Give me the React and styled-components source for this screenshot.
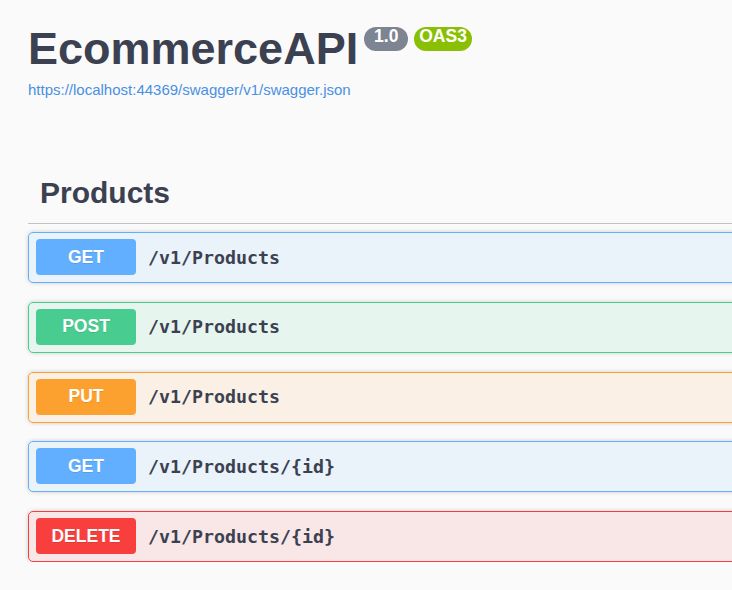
import styled, { createGlobalStyle } from "styled-components";

const GlobalStyle = createGlobalStyle`
	html,
	body {
		margin: 0;
		padding: 0;
		background: #fafafa;
		overflow: hidden;
	}
`;

const methods = {
	get: { main: "#61affe", bg: "rgba(97, 175, 254, 0.1)" },
	post: { main: "#49cc90", bg: "rgba(73, 204, 144, 0.1)" },
	put: { main: "#fca130", bg: "rgba(252, 161, 48, 0.1)" },
	delete: { main: "#f93e3e", bg: "rgba(249, 62, 62, 0.1)" },
};

const operations = [
	{ method: "get", path: "/v1/Products" },
	{ method: "post", path: "/v1/Products" },
	{ method: "put", path: "/v1/Products" },
	{ method: "get", path: "/v1/Products/{id}" },
	{ method: "delete", path: "/v1/Products/{id}" },
];

function App() {
	return (
		<>
			<GlobalStyle />
			<Wrapper>
				<Info>
					<TitleRow>
						<Title>EcommerceAPI</Title>
						<Stamp $color="#7d8492">{" 1.0 "}</Stamp>
						<Stamp $color="#89bf04">OAS3</Stamp>
					</TitleRow>
					<SpecLink href="#">https://localhost:44369/swagger/v1/swagger.json</SpecLink>
				</Info>

				<TagSection>
					<TagHeader>Products</TagHeader>
					<OpList>
						{operations.map((op, i) => (
							<OpBlock key={i} $method={op.method}>
								<Method $method={op.method}>{op.method.toUpperCase()}</Method>
								<Path>{op.path}</Path>
							</OpBlock>
						))}
					</OpList>
				</TagSection>
			</Wrapper>
		</>
	);
}

export default App;

const Wrapper = styled.div`
	width: 1200px;
	padding: 23px 28px 0;
	font-family: "Liberation Sans", Arial, sans-serif;
	color: #3b4151;
`;

const Info = styled.div`
	display: flex;
	flex-direction: column;
	align-items: flex-start;
`;

const TitleRow = styled.div`
	display: flex;
	align-items: flex-start;
`;

const Title = styled.h2`
	margin: 0;
	font-size: 45px;
	line-height: 52px;
	font-weight: 700;
	color: #3b4151;
`;

const Stamp = styled.small`
	margin: 4px 0 0 6px;
	padding: 0 5px 5px;
	border-radius: 57px;
	background: ${(p) => p.$color};
	color: #fff;
	font-size: 17.5px;
	line-height: 19px;
	font-weight: 700;
	white-space: pre;
`;

const SpecLink = styled.a`
	margin-top: 6px;
	font-size: 15px;
	line-height: 17px;
	color: #4990e2;
	text-decoration: none;
`;

const TagSection = styled.section`
	margin-top: 65px;
`;

const TagHeader = styled.h3`
	margin: 0;
	padding: 12px;
	font-size: 30px;
	line-height: 36px;
	font-weight: 700;
	color: #3b4151;
	border-bottom: 1px solid rgba(59, 65, 81, 0.3);
`;

const OpList = styled.div`
	display: flex;
	flex-direction: column;
	gap: 18.75px;
	margin-top: 8px;
`;

const OpBlock = styled.div`
	display: flex;
	align-items: center;
	padding: 6px 7px 7px;
	border: 1px solid ${(p) => methods[p.$method].main};
	border-radius: 5px;
	background: ${(p) => methods[p.$method].bg};
	box-shadow: 0 0 4px rgba(0, 0, 0, 0.19);
`;

const Method = styled.span`
	display: flex;
	align-items: center;
	justify-content: center;
	width: 100px;
	height: 36px;
	border-radius: 4px;
	background: ${(p) => methods[p.$method].main};
	color: #fff;
	font-size: 17.5px;
	font-weight: 700;
	text-shadow: 0 1px 0 rgba(0, 0, 0, 0.1);
`;

const Path = styled.span`
	padding: 0 12px;
	font-family: "DejaVu Sans Mono", "Liberation Mono", monospace;
	font-size: 18.3px;
	font-weight: 700;
	color: #3b4151;
`;
